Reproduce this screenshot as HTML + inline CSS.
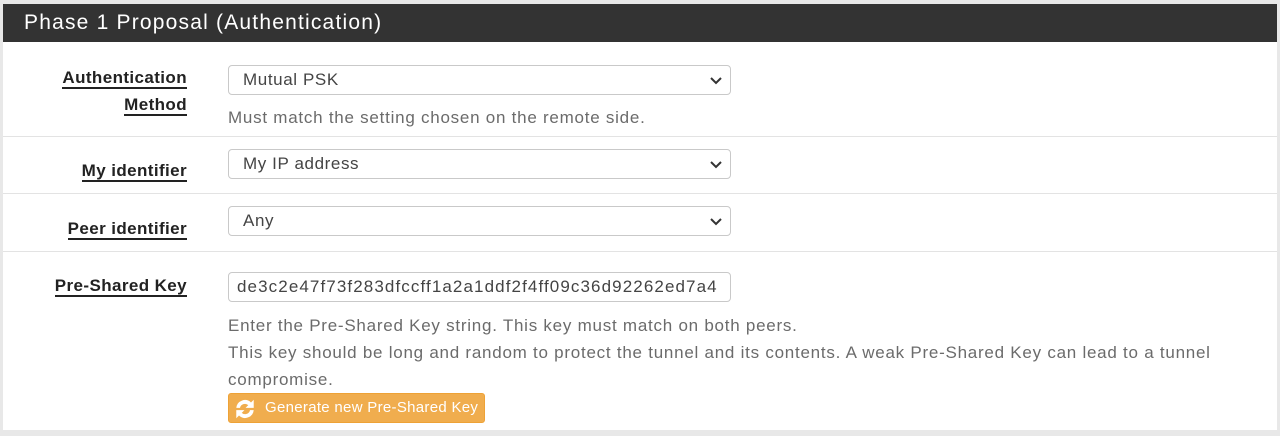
<!DOCTYPE html>
<html><head><style>
body{margin:0;width:1280px;height:436px;background:#e8e8e8;font-family:"Liberation Sans",sans-serif;position:relative;overflow:hidden}
.panel{position:absolute;left:3px;top:4px;width:1274px;height:426px;background:#fff}
.hdr{position:absolute;left:0;top:0;width:1274px;height:38px;background:#333;color:#fff;font-size:21px;letter-spacing:1.2px;line-height:38px;padding-left:21px;box-sizing:border-box}
.sep{position:absolute;left:0;width:1274px;height:1px;background:#e3e3e3}
.lbl{position:absolute;right:1090px;text-align:right;font-weight:bold;font-size:17px;letter-spacing:0.4px;color:#222;line-height:27px}
.lbl span{border-bottom:2px solid #222}
.sel{position:absolute;left:225px;width:503px;height:30px;border:1px solid #c9c9c9;border-radius:4px;box-sizing:border-box;font-size:17px;letter-spacing:0.6px;color:#444;padding-left:14px;line-height:28px}
.sel svg{position:absolute;right:8px;top:11px}
.help{position:absolute;left:225px;font-size:17px;letter-spacing:0.75px;color:#6b6b6b;line-height:27px;white-space:nowrap}
.btn{position:absolute;left:225px;top:389px;width:257px;height:30px;background:#f0ad4e;border:1px solid #eea236;border-radius:3px;box-sizing:border-box;color:#fff;font-size:15px;letter-spacing:0.3px;line-height:28px;padding-left:36px;white-space:nowrap}
.btn svg{position:absolute;left:4px;top:3px}
</style></head><body>
<div class="panel">
<div class="hdr">Phase 1 Proposal (Authentication)</div>
<div class="lbl" style="top:60px"><span>Authentication</span><br><span>Method</span></div>
<div class="sel" style="top:61px">Mutual PSK<svg width="12" height="8"><path d="M1 1l5 5 5-5" stroke="#333" stroke-width="2" fill="none"/></svg></div>
<div class="help" style="top:100px">Must match the setting chosen on the remote side.</div>
<div class="sep" style="top:132px"></div>
<div class="lbl" style="top:153px"><span>My identifier</span></div>
<div class="sel" style="top:145px">My IP address<svg width="12" height="8"><path d="M1 1l5 5 5-5" stroke="#333" stroke-width="2" fill="none"/></svg></div>
<div class="sep" style="top:189px"></div>
<div class="lbl" style="top:211px"><span>Peer identifier</span></div>
<div class="sel" style="top:202px">Any<svg width="12" height="8"><path d="M1 1l5 5 5-5" stroke="#333" stroke-width="2" fill="none"/></svg></div>
<div class="sep" style="top:247px"></div>
<div class="lbl" style="top:268px"><span>Pre-Shared Key</span></div>
<div class="sel" style="top:268px;padding-left:8px;overflow:hidden;white-space:nowrap;letter-spacing:1.1px">de3c2e47f73f283dfccff1a2a1ddf2f4ff09c36d92262ed7a4</div>
<div class="help" style="top:308px">Enter the Pre-Shared Key string. This key must match on both peers.<br>This key should be long and random to protect the tunnel and its contents. A weak Pre-Shared Key can lead to a tunnel<br>compromise.</div>
<div class="btn"><svg width="24" height="24" viewBox="0 0 22 22"><path d="M3 10a8 8 0 0 1 13.5-5l2.5-2.5v7.5h-7.5l2.5-2.5a4.6 4.6 0 0 0-7.6 2.5z M19 12a8 8 0 0 1-13.5 5l-2.5 2.5v-7.5h7.5l-2.5 2.5a4.6 4.6 0 0 0 7.6-2.5z" fill="#fff"/></svg>Generate new Pre-Shared Key</div>
</div>
</body></html>
